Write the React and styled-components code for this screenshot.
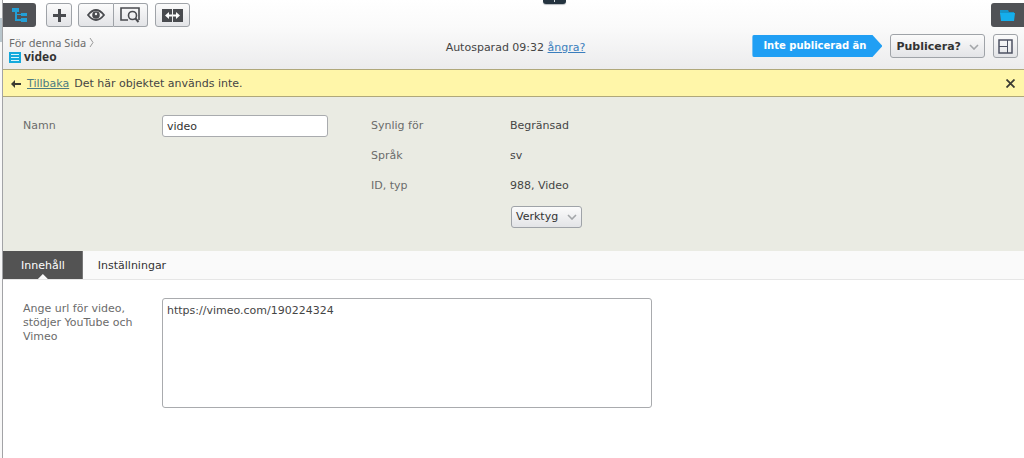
import React from "react";
import styled, { createGlobalStyle, css } from "styled-components";

const Global = createGlobalStyle`
  * { box-sizing: border-box; }
  body {
    margin: 0;
    background: #fff;
    color: #454545;
    font: 11px/14px "DejaVu Sans", Verdana, sans-serif;
  }
  button, input, textarea { font: inherit; color: inherit; margin: 0; }
  button { cursor: pointer; }
  svg { display: block; }
`;

const Shell = styled.div`
  position: relative;
  display: flex;
  min-height: 100vh;
`;
const Gutter = styled.div`
  flex: none;
  width: 3px;
  background: linear-gradient(#f6f7f8 18px, #b9c6cd 18px, #b9c6cd 42px, #f8f8f8 42px);
  border-right: 1px solid #a2a3a6;
`;
const Main = styled.main`
  flex: 1;
  min-width: 0;
`;
const PinHandle = styled.div`
  position: absolute;
  top: 0;
  left: 53%;
  width: 23px;
  height: 4px;
  border-radius: 0 0 3px 3px;
  background: #24333f;
  box-shadow: 0 1px 1px #b5b9bd;
  display: flex;
  justify-content: center;
  &::after { content: ""; width: 1px; height: 2px; background: #cdd4d9; }
`;

const Header = styled.header`
  padding-top: 3px;
  background: linear-gradient(#fff, #fafafa 40%, #ececed);
`;
const Toolbar = styled.div`
  display: flex;
  align-items: flex-start;
  height: 31px;
`;
const Group = styled.div`
  display: flex;
  margin-left: ${(p) => p.$gap}px;
`;
const raised = css`
  border: 1px solid #9fa3a8;
  border-radius: 3px;
  background: linear-gradient(#fbfbfb, #e3e4e7);
  color: #494b4f;
`;
const IconButton = styled.button`
  ${raised}
  display: flex;
  align-items: center;
  justify-content: center;
  width: ${(p) => p.$width}px;
  height: 24px;
  padding: 0;
  ${Group} &:not(:first-child) { border-left: 0; border-radius: 0 3px 3px 0; }
  ${Group} &:not(:last-child) { border-radius: 3px 0 0 3px; }
`;
const PaneToggle = styled.button`
  display: flex;
  align-items: center;
  justify-content: center;
  width: 33px;
  height: 24px;
  padding: 0;
  border: 0;
  border-radius: ${(p) => (p.$right ? "3px 0 0 3px" : "0 3px 3px 0")};
  background: #505256;
  margin-left: ${(p) => (p.$right ? "auto" : "0")};
`;

const StatusBar = styled.div`
  display: grid;
  grid-template-columns: 1fr auto 1fr;
  align-items: start;
  height: 35px;
  padding: 0 6px;
`;
const Crumbs = styled.div`
  display: flex;
  align-items: center;
  gap: 3px;
  padding-top: 1px;
  color: #6b6b6b;
  font: 11px/15px "Noto Sans", "Open Sans", sans-serif;
`;
const Title = styled.h1`
  display: flex;
  align-items: center;
  gap: 3px;
  margin: 0;
  color: #333;
  font: bold 12px/14px "Open Sans", "Noto Sans", sans-serif;
`;
const SaveState = styled.div`
  padding: 7px 0 0 4px;
`;
const Link = styled.a`
  color: ${(p) => (p.$muted ? "#4c7b82" : "#3a7ebd")};
  text-decoration: underline;
`;
const Actions = styled.div`
  display: flex;
  justify-content: flex-end;
  gap: 8px;
`;
const StatusTag = styled.span`
  height: 22px;
  margin-top: 1px;
  padding: 4px 16px 4px 11px;
  color: #fff;
  font-weight: bold;
  font-size: 10px;
  background: #209ff4;
  border-radius: 2px;
  clip-path: polygon(0 0, calc(100% - 10px) 0, 100% 50%, calc(100% - 10px) 100%, 0 100%);
`;
const MenuButton = styled.button`
  ${raised}
  display: flex;
  align-items: center;
  gap: ${(p) => (p.$strong ? 8 : 9)}px;
  height: ${(p) => (p.$strong ? 24 : 22)}px;
  padding: ${(p) => (p.$strong ? "2px 5px 0 5px" : "0 4px")};
  font-weight: ${(p) => (p.$strong ? "bold" : "normal")};
  color: #333;
`;

const Notice = styled.div`
  display: flex;
  align-items: center;
  height: 28px;
  padding: 1px 7px 0 8px;
  border: solid #b0a87a;
  border-width: 1px 0;
  background: #fff6a9;
  gap: 5px;
`;
const CloseButton = styled.button`
  margin-left: auto;
  padding: 2px;
  border: 0;
  background: none;
`;

const Properties = styled.section`
  display: grid;
  grid-template-columns: 348px 1fr;
  min-height: 154px;
  padding: 18px 20px 0;
  background: #eaebe3;
`;
const Label = styled.label`
  color: #6b6b6b;
`;
const NameField = styled.div`
  display: grid;
  grid-template-columns: 139px 166px;
  align-items: center;
  align-self: start;
`;
const TextInput = styled.input`
  width: 100%;
  height: 22px;
  padding: 0 4px;
  border: 1px solid #a9abae;
  border-radius: 3px;
  background: #fff;
  color: #333;
`;
const Facts = styled.dl`
  display: grid;
  grid-template-columns: 139px auto;
  grid-auto-rows: 30px;
  justify-content: start;
  align-content: start;
  margin: 0;
  line-height: 22px;
`;
const Term = styled.dt`
  color: #6b6b6b;
`;
const Fact = styled.dd`
  margin: 0;
`;
const Tools = styled(Fact)`
  grid-column: 2;
  padding: 1px;
`;

const Tabs = styled.div`
  display: flex;
  background: #fafafa;
  border-bottom: 1px solid #e6e6e6;
`;
const Tab = styled.button`
  height: 28px;
  padding: 2px 15px 0;
  border: 0;
  background: none;
  color: #333;
  ${(p) => p.$active && css`
    padding: 2px 18px 0;
    background: #535353;
    color: #fff;
    clip-path: polygon(0 0, 100% 0, 100% 100%, calc(50% + 5px) 100%, 50% calc(100% - 5px), calc(50% - 5px) 100%, 0 100%);
  `}
`;
const Content = styled.section`
  display: grid;
  grid-template-columns: 139px minmax(0, 490px);
  align-items: start;
  padding: 18px 20px;
`;
const UrlLabel = styled(Label)`
  max-width: 120px;
  padding-top: 4px;
  line-height: 14px;
`;
const UrlArea = styled.textarea`
  display: block;
  width: 100%;
  height: 110px;
  padding: 5px 4px;
  border: 1px solid #a9abae;
  border-radius: 3px;
  resize: none;
`;

const Chevron = () => (
  <svg width="10" height="6" viewBox="0 0 10 6" fill="none" stroke="#a3a6a9" strokeWidth="1.600" aria-hidden="true">
    <path d="M1 1l4 4 4-4" />
  </svg>
);
const TreeIcon = () => (
  <svg width="16" height="14" viewBox="0 0 16 14" fill="#239fd6" aria-hidden="true">
    <path d="M0 0h7v4H0zM9 5h6v3H9zM9 10h6v4H9zM3 4h2v7h4v2H3zM3 6h6v1H3z" />
  </svg>
);
const PlusIcon = () => (
  <svg width="13" height="13" viewBox="0 0 13 13" fill="currentColor" aria-hidden="true">
    <path d="M5 0h3v5h5v3H8v5H5V8H0V5h5z" />
  </svg>
);
const EyeIcon = () => (
  <svg width="18" height="12" viewBox="0 0 18 12" aria-hidden="true">
    <path fill="#f2f2f3" stroke="currentColor" strokeWidth="1.800" d="M1 6Q9-4 17 6Q9 16 1 6z" />
    <circle cx="9" cy="6" r="3.800" fill="currentColor" />
    <circle cx="9" cy="5" r="1.200" fill="#f2f2f3" />
  </svg>
);
const PreviewIcon = () => (
  <svg width="21" height="16" viewBox="0 0 21 16" fill="none" stroke="currentColor" aria-hidden="true">
    <path strokeWidth="1.600" d="M8 13H1V1h18v12" />
    <circle cx="12.500" cy="8.500" r="4" strokeWidth="1.600" />
    <path strokeWidth="2" d="M15.500 11.500l3 3.500" />
  </svg>
);
const CompareIcon = () => (
  <svg width="21" height="13" viewBox="0 0 21 13" aria-hidden="true">
    <path fill="currentColor" d="M0 0h10v13H0zM11 0h10v13H11z" />
    <path fill="#fff" d="M3 6.500L7 3v2.500h3v2H7V10zM18 6.500L14 3v2.500h-3v2h3V10z" />
  </svg>
);
const FolderIcon = () => (
  <svg width="15" height="11" viewBox="0 0 15 11" aria-hidden="true">
    <path fill="#1594c9" d="M0 0h8l1 2h5v2H0z" />
    <path fill="#15aeec" d="M0 3h15l-1 8H1z" />
  </svg>
);
const PageIcon = () => (
  <svg width="12" height="11" viewBox="0 0 12 11" aria-hidden="true">
    <path fill="#14a9dc" d="M0 0h12v11H0z" />
    <path stroke="#d9f4fc" d="M2 2.500h8M2 5.500h8M2 8.500h8" />
  </svg>
);
const CrumbArrow = () => (
  <svg width="5" height="11" viewBox="0 0 5 11" fill="none" stroke="#999" aria-hidden="true">
    <path d="M1 1l3 4.500L1 10" />
  </svg>
);
const LayoutIcon = () => (
  <svg width="15" height="15" viewBox="0 0 15 15" fill="none" stroke="#4d5263" aria-hidden="true">
    <path strokeWidth="1.500" d="M1 1h13v13H1z" />
    <path d="M9.500 1v13M1 7.500h8" />
  </svg>
);
const BackIcon = () => (
  <svg width="11" height="8" viewBox="0 0 11 8" fill="#3b3b33" aria-hidden="true">
    <path d="M0 4l4-4v3h6v2H4v3z" />
  </svg>
);
const CloseIcon = () => (
  <svg width="9" height="9" viewBox="0 0 9 9" stroke="#3b3b33" strokeWidth="1.800" aria-hidden="true">
    <path d="M.5.500l8 8M8.500.500l-8 8" />
  </svg>
);

export default function App() {
  return (
    <Shell>
      <Global />
      <Gutter />
      <Main>
        <Header>
          <Toolbar>
            <PaneToggle aria-label="Navigation"><TreeIcon /></PaneToggle>
            <Group $gap={10}>
              <IconButton $width={26} aria-label="Lägg till"><PlusIcon /></IconButton>
            </Group>
            <Group $gap={6}>
              <IconButton $width={36} aria-label="Förhandsgranska"><EyeIcon /></IconButton>
              <IconButton $width={34} aria-label="Visningsläge"><PreviewIcon /></IconButton>
            </Group>
            <Group $gap={7}>
              <IconButton $width={35} aria-label="Jämför"><CompareIcon /></IconButton>
            </Group>
            <PaneToggle $right aria-label="Resurser"><FolderIcon /></PaneToggle>
          </Toolbar>
          <StatusBar>
            <div>
              <Crumbs>För denna Sida <CrumbArrow /></Crumbs>
              <Title><PageIcon />video</Title>
            </div>
            <SaveState>
              Autosparad 09:32 <Link href="#undo">ångra?</Link>
            </SaveState>
            <Actions>
              <StatusTag>Inte publicerad än</StatusTag>
              <MenuButton $strong aria-haspopup="menu">Publicera? <Chevron /></MenuButton>
              <IconButton $width={25} aria-label="Layout"><LayoutIcon /></IconButton>
            </Actions>
          </StatusBar>
        </Header>
        <Notice>
          <BackIcon />
          <Link href="#back" $muted>Tillbaka</Link>
          <span>Det här objektet används inte.</span>
          <CloseButton aria-label="Stäng"><CloseIcon /></CloseButton>
        </Notice>
        <Properties>
          <NameField>
            <Label htmlFor="name">Namn</Label>
            <TextInput id="name" defaultValue="video" />
          </NameField>
          <Facts>
            <Term>Synlig för</Term><Fact>Begränsad</Fact>
            <Term>Språk</Term><Fact>sv</Fact>
            <Term>ID, typ</Term><Fact>988, Video</Fact>
            <Tools>
              <MenuButton aria-haspopup="menu">Verktyg <Chevron /></MenuButton>
            </Tools>
          </Facts>
        </Properties>
        <Tabs role="tablist">
          <Tab role="tab" aria-selected="true" $active>Innehåll</Tab>
          <Tab role="tab" aria-selected="false">Inställningar</Tab>
        </Tabs>
        <Content>
          <UrlLabel htmlFor="url">Ange url för video, stödjer YouTube och Vimeo</UrlLabel>
          <UrlArea id="url" spellCheck={false} defaultValue="https://vimeo.com/190224324" />
        </Content>
      </Main>
      <PinHandle />
    </Shell>
  );
}
